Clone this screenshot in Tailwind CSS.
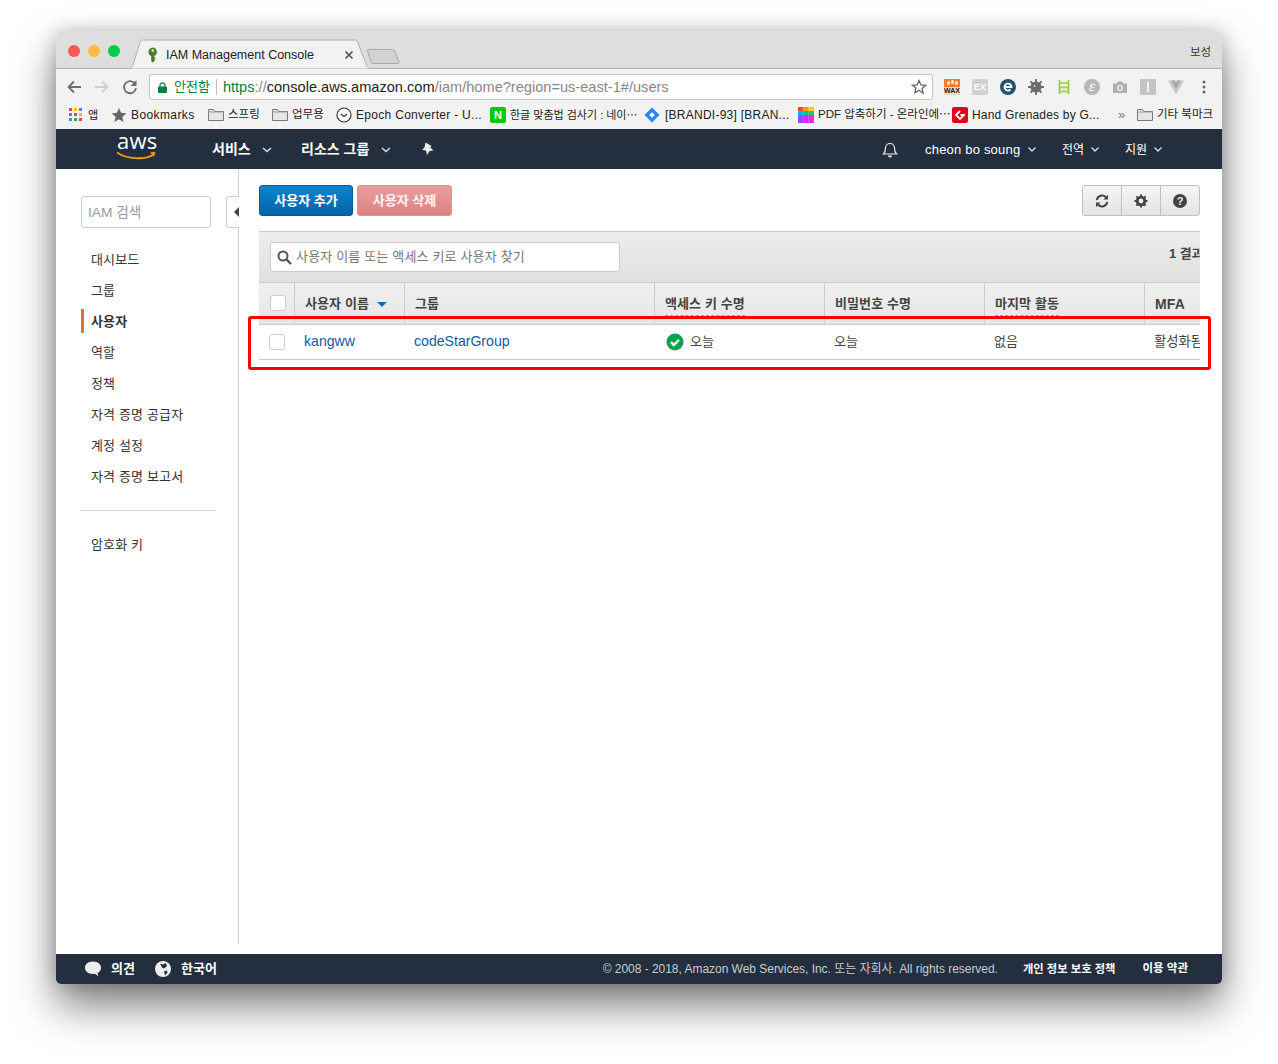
<!DOCTYPE html>
<html lang="ko">
<head>
  <meta charset="UTF-8">
  <title>IAM Management Console</title>
  <script src="https://cdn.jsdelivr.net/npm/@tailwindcss/browser@4"></script>
</head>
<body class="bg-white h-[1064px] overflow-hidden pt-[31px] pl-[56px] font-['Liberation_Sans','Noto_Sans_CJK_KR',sans-serif]">
  <div class="relative w-[1166px] h-[953px] rounded-[5px] flex flex-col shadow-[0_22px_42px_rgba(0,0,0,0.5),0_0_18px_rgba(0,0,0,0.2)] overflow-hidden bg-white">

    <!-- tab strip -->
    <div class="relative h-[38px] shrink-0 bg-[#dedede] border-b border-[#b0b0b0] flex items-center">
      <div class="flex gap-[8px] ml-[12px] mt-[3px]">
        <span class="w-3 h-3 rounded-full bg-[#fc5753]"></span>
        <span class="w-3 h-3 rounded-full bg-[#fdbc40]"></span>
        <span class="w-3 h-3 rounded-full bg-[#00ca4e]"></span>
      </div>
      <svg class="absolute left-[72px] top-[8px]" width="252" height="30" viewBox="0 0 252 30">
        <path d="M0 29.500h1c2 0 3-1 3.800-3L12 3.500C12.600 1.800 13.500 1 15.500 1H226c2 0 3 .8 3.700 2.500l9 23c.7 2 2 3 4 3h1" fill="#f2f2f2" stroke="#b0b0b0"/>
      </svg>
      <svg class="absolute left-[310px] top-[17px]" width="36" height="18" viewBox="0 0 36 18">
        <path d="M2.500 1.500h24c1 0 1.500.4 2 1.300l4.500 11c.4 1-.1 1.700-1 1.700H7c-1 0-1.500-.4-2-1.300L1.500 3c-.3-.9 0-1.500 1-1.500z" fill="#d2d2d2" stroke="#a8a8a8"/>
      </svg>
      <svg class="absolute left-[91px] top-[16px]" width="12" height="16" viewBox="0 0 12 16">
        <path d="M5.500 0.500a4.500 4.500 0 0 1 1.700 8.600V10l1.600 1-1.600 1.200 1 1-1 1-1.800 1.300-1.200-1.200V9.100A4.500 4.500 0 0 1 5.500.5z" fill="#4d7a2a"/>
        <circle cx="5.800" cy="3.500" r="1.300" fill="#e8e8e8"/>
      </svg>
      <span class="absolute left-[110px] top-[16px] text-[12.500px] leading-[16px] text-[#222]">IAM Management Console</span>
      <span class="absolute left-[288px] top-[19px]">
        <svg class="block" width="10" height="10" viewBox="0 0 10 10"><path d="M1.500 1.500l7 7M8.500 1.500l-7 7" stroke="#555" stroke-width="1.700"/></svg>
      </span>
      <span class="absolute left-[1134px] top-[13px] text-[11.500px] leading-[16px] text-[#333]">보성</span>
    </div>

    <!-- address bar -->
    <div class="h-[32px] shrink-0 bg-[#f2f2f2] flex items-center relative pt-[4px]">
      <div class="flex items-center w-[93px] pl-[10px] gap-[12px]">
        <svg width="16" height="16" viewBox="0 0 16 16"><path d="M15 8H2.500M8 2.500L2.500 8 8 13.500" fill="none" stroke="#6e6e6e" stroke-width="1.800"/></svg>
        <svg width="16" height="16" viewBox="0 0 16 16"><path d="M1 8h12.500M8 2.500L13.500 8 8 13.500" fill="none" stroke="#d0d0d0" stroke-width="1.800"/></svg>
        <svg width="16" height="16" viewBox="0 0 16 16"><path d="M13 4.800A6 6 0 1 0 14 9" fill="none" stroke="#6e6e6e" stroke-width="1.800"/><path d="M14.500 1v6h-6z" fill="#6e6e6e"/></svg>
      </div>
      <div class="w-[784px] h-[26px] bg-white border border-[#c4c4c4] rounded-[3px] flex items-center pl-[8px] text-[14.600px] leading-[26px] whitespace-nowrap">
        <svg class="mr-[7px]" width="9" height="11" viewBox="0 0 9 11"><path d="M2 5V3.300a2.500 2.500 0 0 1 5 0V5" fill="none" stroke="#0b8043" stroke-width="1.200"/><rect y="4.500" width="9" height="6.500" rx="1" fill="#0b8043"/></svg>
        <span class="text-[#0b8043] text-[13px]">안전함</span>
        <span class="w-px h-[16px] bg-[#c0c0c0] mx-[6px]"></span>
        <span class="text-[#0b8043]">https</span><span class="text-[#888]">://</span><span class="text-[#222]">console.aws.amazon.com</span><span class="text-[#888]">/iam/home?region=us-east-1#/users</span>
        <svg class="ml-auto mr-[5px]" width="16" height="16" viewBox="0 0 16 16"><path d="M8 1.500l1.900 4.400 4.800.4-3.600 3.200 1 4.700L8 11.300l-4.100 2.500 1-4.700L1.300 6.300l4.800-.4z" fill="none" stroke="#666" stroke-width="1.300"/></svg>
      </div>
      <!-- extension icons -->
      <div class="flex items-center ml-[11px] gap-[12px]">
        <div class="relative w-[16px] h-[16px] bg-[#f47b30] overflow-hidden">
          <span class="absolute left-[3px] top-[2px] w-[3px] h-[4px] rounded-full bg-white/80"></span>
          <span class="absolute left-[7px] top-[1px] w-[3px] h-[4px] rounded-full bg-white/80"></span>
          <span class="absolute left-[11px] top-[2px] w-[3px] h-[4px] rounded-full bg-white/80"></span>
          <span class="absolute left-[-1px] right-[-1px] bottom-[0px] bg-white/70 text-[#222] text-[7px] leading-[8px] font-bold text-center">WAX</span>
        </div>
        <div class="w-[16px] h-[16px] bg-[#d0d0d0] rounded-[2px] text-white text-[9px] leading-[16px] font-bold text-center">EX</div>
        <svg width="16" height="16" viewBox="0 0 16 16"><circle cx="8" cy="8" r="8" fill="#24536e"/><path d="M4.500 8h7A3.500 3.500 0 1 0 10.500 10.500" fill="none" stroke="#fff" stroke-width="1.800"/></svg>
        <svg width="16" height="16" viewBox="0 0 16 16"><circle cx="8" cy="8" r="5.500" fill="#6b6b6b"/><path d="M8 0v16M0 8h16M2.500 2.500l11 11M13.500 2.500l-11 11" stroke="#6b6b6b" stroke-width="1.800"/><circle cx="6.500" cy="7" r="1" fill="#ddd"/></svg>
        <svg width="16" height="16" viewBox="0 0 16 16"><path d="M3.500 1v14M12.500 1v14" stroke="#8cc63f" stroke-width="1.600" fill="none"/><path d="M3.500 4h9M3.500 8.500h9M3.500 12.500h9" stroke="#a5d65a" stroke-width="1.800" fill="none"/></svg>
        <div class="w-[16px] h-[16px] rounded-full bg-[#b8b8b8] text-white text-[15px] leading-[15px] italic text-center font-['Liberation_Serif',serif]">&#949;</div>
        <svg width="16" height="16" viewBox="0 0 16 16"><path d="M1 4.500h3.500L6 2.500h4l1.500 2H15V14H1z" fill="#b0b0b0"/><circle cx="8" cy="9" r="3" fill="#f2f2f2"/><circle cx="8" cy="9" r="1.800" fill="#b0b0b0"/></svg>
        <div class="w-[16px] h-[16px] bg-[#c4c4c4] flex items-center justify-center"><span class="block w-[2.500px] h-[10px] bg-[#f2f2f2]"></span></div>
        <svg width="16" height="16" viewBox="0 0 16 16"><path d="M0 1.500h16L8 15.500z" fill="#c8c8c8"/><path d="M3.500 1.500h3L8 4.500l1.500-3h3L8 10z" fill="#a8a8a8"/></svg>
        <svg class="ml-[6px]" width="4" height="14" viewBox="0 0 4 14"><circle cx="2" cy="2" r="1.500" fill="#666"/><circle cx="2" cy="7" r="1.500" fill="#666"/><circle cx="2" cy="12" r="1.500" fill="#666"/></svg>
      </div>
    </div>

    <!-- bookmarks bar -->
    <div class="h-[28px] shrink-0 bg-[#f2f2f2] flex items-center pl-[13px] text-[12px] tracking-[0.3px] text-[#222] whitespace-nowrap">
      <svg class="mr-[5px]" width="14" height="14" viewBox="0 0 14 14">
        <rect width="3" height="3" fill="#ea4335"/><rect x="5" width="3" height="3" fill="#fbbc05"/><rect x="10" width="3" height="3" fill="#4285f4"/>
        <rect y="5" width="3" height="3" fill="#34a853"/><rect x="5" y="5" width="3" height="3" fill="#ea4335"/><rect x="10" y="5" width="3" height="3" fill="#fbbc05"/>
        <rect y="10" width="3" height="3" fill="#4285f4"/><rect x="5" y="10" width="3" height="3" fill="#34a853"/><rect x="10" y="10" width="3" height="3" fill="#ea4335"/>
      </svg>
      <span class="w-[13px] mr-[10px] text-[11px] tracking-normal">앱</span>
      <svg class="mr-[4px]" width="16" height="16" viewBox="0 0 16 16"><path d="M8 1l2.100 4.800 5.200.5-3.900 3.500 1.100 5.100L8 12.200l-4.500 2.700 1.100-5.100L.7 6.300l5.200-.5z" fill="#666"/></svg>
      <span class="w-[77px] tracking-[0.4px]">Bookmarks</span>
      <svg class="mr-[4px] mb-[2px]" width="16" height="13" viewBox="0 0 16 13"><path d="M.5 12.500V1.500h5l1.500 2h8.500v9z" fill="#e6e6e6" stroke="#777"/><path d="M.5 4h15" stroke="#999"/></svg>
      <span class="w-[44px] text-[11.500px] tracking-normal">스프링</span>
      <svg class="mr-[4px] mb-[2px]" width="16" height="13" viewBox="0 0 16 13"><path d="M.5 12.500V1.500h5l1.500 2h8.500v9z" fill="#e6e6e6" stroke="#777"/><path d="M.5 4h15" stroke="#999"/></svg>
      <span class="w-[44px] text-[11.500px] tracking-normal">업무용</span>
      <svg class="mr-[4px]" width="16" height="16" viewBox="0 0 16 16"><circle cx="8" cy="8" r="7" fill="#fff" stroke="#333" stroke-width="1.200"/><path d="M5 7l3 2.500L11 7" fill="none" stroke="#333" stroke-width="1.200"/></svg>
      <span class="w-[134px]">Epoch Converter - U...</span>
      <div class="mr-[4px] w-[16px] h-[16px] rounded-[2px] bg-[#0ac80a] text-white text-[11px] leading-[16px] tracking-normal font-bold text-center">N</div>
      <span class="w-[134px] text-[11px] tracking-normal">한글 맞춤법 검사기 : 네이⋯</span>
      <svg class="mr-[5px]" width="16" height="16" viewBox="0 0 16 16"><path d="M8 .5L15.500 8 8 15.500.5 8z" fill="#2684ff"/><rect x="6" y="6" width="4" height="4" transform="rotate(45 8 8)" fill="#fff"/></svg>
      <span class="w-[133px] tracking-[0.25px]">[BRANDI-93] [BRAN...</span>
      <svg class="mr-[4px]" width="16" height="16" viewBox="0 0 16 16">
        <rect width="5.400" height="4" fill="#f44b1c"/><rect x="5.300" width="5.400" height="4" fill="#ff9a00"/><rect x="10.600" width="5.400" height="4" fill="#ffcf00"/>
        <rect y="4" width="5.400" height="4" fill="#00b7ff"/><rect x="5.300" y="4" width="5.400" height="4" fill="#00c48c"/><rect x="10.600" y="4" width="5.400" height="4" fill="#2cc84d"/>
        <rect y="8" width="5.400" height="8" fill="#8e4cff"/><rect x="5.300" y="8" width="5.400" height="8" fill="#d028ff"/><rect x="10.600" y="8" width="5.400" height="8" fill="#ff28e0"/>
      </svg>
      <span class="w-[134px] text-[11.500px] tracking-normal">PDF 압축하기 - 온라인에⋯</span>
      <div class="mr-[4px] w-[16px] h-[16px] rounded-[2px] bg-[#e2001a] flex items-center justify-center">
        <svg width="10" height="10" viewBox="0 0 10 10"><path d="M5 1L1 5l4 4 4-4H5.500" fill="none" stroke="#fff" stroke-width="1.800"/></svg>
      </div>
      <span class="w-[146px] tracking-[0.2px]">Hand Grenades by G...</span>
      <span class="w-[19px] text-[#777] text-[13px]">»</span>
      <svg class="mr-[4px] mb-[2px]" width="16" height="13" viewBox="0 0 16 13"><path d="M.5 12.500V1.500h5l1.500 2h8.500v9z" fill="#e6e6e6" stroke="#777"/><path d="M.5 4h15" stroke="#999"/></svg>
      <span class="text-[11.500px] tracking-normal">기타 북마크</span>
    </div>

    <!-- aws nav -->
    <div class="h-[40px] shrink-0 bg-[#232f3e] flex items-center text-white relative">
      <div class="relative w-[156px] h-[40px]">
        <span class="absolute left-[61px] top-[-2px] text-[22px] leading-[26px] tracking-[0.2px] font-['Open_Sans',sans-serif]">aws</span>
        <svg class="absolute left-[60px] top-[21px]" width="42" height="12" viewBox="0 0 42 12"><path d="M1 2.500C11 9.500 29 10 38 4.500" fill="none" stroke="#f90" stroke-width="1.800"/><path d="M34 2.500l5.500-.8-1.500 5z" fill="#f90"/></svg>
      </div>
      <span class="text-[14px] font-bold w-[50px]">서비스</span>
      <svg class="mr-[29px] mt-[2px]" width="10" height="6" viewBox="0 0 10 6"><path d="M1 1l4 3.500L9 1" fill="none" stroke="#ddd" stroke-width="1.500"/></svg>
      <span class="text-[14px] font-bold w-[80px]">리소스 그룹</span>
      <svg class="mr-[30px] mt-[2px]" width="10" height="6" viewBox="0 0 10 6"><path d="M1 1l4 3.500L9 1" fill="none" stroke="#ddd" stroke-width="1.500"/></svg>
      <svg width="14" height="14" viewBox="0 0 14 14"><path d="M4.500.5l6 3.500-1.200 1.500 3.200 3-4 .5L6 13 5 8.500 1 8l2.500-2.500z" fill="#eee"/></svg>
      <svg class="ml-[447px]" width="16" height="18" viewBox="0 0 16 18"><path d="M1.500 14c1.500-1.500 2-3 2-6a4.500 4.500 0 0 1 9 0c0 3 .5 4.500 2 6z" fill="none" stroke="#eee" stroke-width="1.200"/><path d="M6 15.500a2 2 0 0 0 4 0z" fill="#eee"/></svg>
      <span class="ml-[27px] mt-[1px] text-[13px] w-[103px] tracking-[0.2px] whitespace-nowrap">cheon bo soung</span>
      <svg class="mr-[26px] mt-[1px]" width="8" height="5" viewBox="0 0 8 5"><path d="M.5.500L4 4 7.500.500" fill="none" stroke="#ddd" stroke-width="1.300"/></svg>
      <span class="text-[12px] w-[29px] mt-[1px]">전역</span>
      <svg class="mr-[26px] mt-[1px]" width="8" height="5" viewBox="0 0 8 5"><path d="M.5.500L4 4 7.500.500" fill="none" stroke="#ddd" stroke-width="1.300"/></svg>
      <span class="text-[12px] w-[29px] mt-[1px]">지원</span>
      <svg class="mt-[1px]" width="8" height="5" viewBox="0 0 8 5"><path d="M.5.500L4 4 7.500.500" fill="none" stroke="#ddd" stroke-width="1.300"/></svg>
    </div>

    <!-- main -->
    <div class="flex-1 flex relative">
      <!-- sidebar -->
      <div class="w-[183px] h-[775px] shrink-0 border-r border-[#cfcfcf] relative">
        <div class="ml-[25px] mt-[27px] w-[130px] h-[32px] border border-[#ccc] rounded-[3px] px-[6px] text-[13.700px] leading-[31px] text-[#999]">IAM 검색</div>
        <div class="absolute right-[-1px] top-[27px] w-[13px] h-[32px] bg-white border border-r-0 border-[#ccc] rounded-l-[4px] flex items-center justify-end">
          <span class="w-0 h-0 border-y-[5px] border-y-transparent border-r-[5px] border-r-[#444]"></span>
        </div>
        <ul class="mt-[16px] text-[13px] tracking-[0.15px] text-[#333]">
          <li class="h-[31px] leading-[31px] pl-[35px]">대시보드</li>
          <li class="h-[31px] leading-[31px] pl-[35px]">그룹</li>
          <li class="h-[31px] leading-[31px] pl-[35px] font-bold relative"><span class="absolute left-[25px] top-[3px] w-[3px] h-[24px] bg-[#dd7722]"></span>사용자</li>
          <li class="h-[31px] leading-[31px] pl-[35px]">역할</li>
          <li class="h-[31px] leading-[31px] pl-[35px]">정책</li>
          <li class="h-[31px] leading-[31px] pl-[35px]">자격 증명 공급자</li>
          <li class="h-[31px] leading-[31px] pl-[35px]">계정 설정</li>
          <li class="h-[31px] leading-[31px] pl-[35px]">자격 증명 보고서</li>
        </ul>
        <div class="ml-[25px] mt-[18px] w-[135px] border-t border-dotted border-[#c8c8c8]"></div>
        <div class="mt-[18px] h-[31px] leading-[31px] pl-[35px] text-[13px] tracking-[0.15px] text-[#333]">암호화 키</div>
      </div>

      <!-- content -->
      <div class="flex-1 pl-[20px] pr-[22px] pt-[16px] min-w-0">
        <div class="flex gap-[4px] h-[31px]">
          <div class="w-[94px] rounded-[3px] bg-linear-to-b from-[#0a84cf] to-[#0664a8] border border-[#0a5a94] text-white text-[13px] font-bold leading-[29px] text-center">사용자 추가</div>
          <div class="w-[95px] rounded-[3px] bg-linear-to-b from-[#e8a0a0] to-[#dc8080] border border-[#dc9090] text-white/90 text-[13px] font-bold leading-[29px] text-center">사용자 삭제</div>
          <div class="ml-auto w-[118px] flex border border-[#c0c0c0] rounded-[3px] bg-linear-to-b from-[#f5f5f5] to-[#e4e4e4]">
            <div class="flex-1 flex items-center justify-center border-r border-[#c0c0c0]">
              <svg width="14" height="14" viewBox="0 0 14 14"><path d="M1.800 6A5.300 5.300 0 0 1 11 3.400M12.200 8A5.300 5.300 0 0 1 3 10.600" fill="none" stroke="#444" stroke-width="2"/><path d="M13 .8v4.700H8.300zM1 13.200V8.500h4.700z" fill="#444"/></svg>
            </div>
            <div class="flex-1 flex items-center justify-center border-r border-[#c0c0c0]">
              <svg width="14" height="14" viewBox="0 0 14 14"><circle cx="7" cy="7" r="3.800" fill="none" stroke="#444" stroke-width="2.800"/><path d="M7 .5v13M.5 7h13M2.400 2.400l9.200 9.200M11.600 2.400l-9.200 9.200" stroke="#444" stroke-width="2" stroke-dasharray="2.500 8 2.500"/></svg>
            </div>
            <div class="flex-1 flex items-center justify-center">
              <div class="w-[14px] h-[14px] rounded-full bg-[#444] text-[#eee] text-[11px] leading-[14px] font-bold text-center">?</div>
            </div>
          </div>
        </div>

        <div class="mt-[15px] w-[941px] overflow-hidden">
          <div class="h-[51px] relative bg-linear-to-b from-[#ededed] to-[#e0e0e0] border-t border-[#ccc] pl-[11px] pt-[10px]">
            <div class="w-[350px] h-[30px] bg-white border border-[#ccc] rounded-[3px] flex items-center pl-[6px] text-[13px] tracking-[0.17px] text-[#777] whitespace-nowrap">
              <svg class="mr-[4px]" width="15" height="15" viewBox="0 0 15 15"><circle cx="6" cy="6" r="4.500" fill="none" stroke="#555" stroke-width="2"/><path d="M9.500 9.500l4.500 4.500" stroke="#555" stroke-width="2.400"/></svg>
              사용자 이름 또는 액세스 키로 사용자 찾기
            </div>
            <span class="absolute left-[910px] top-[12px] text-[13px] font-bold text-[#444] whitespace-nowrap">1 결과</span>
          </div>
          <div class="flex w-[1000px] h-[43px] bg-linear-to-b from-[#f0f0f0] to-[#e6e6e6] border-y border-[#ccc] text-[13px] tracking-[0.1px] font-bold text-[#444] whitespace-nowrap">
            <div class="w-[36px] border-r border-[#ccc] pl-[11px] pt-[12px]"><span class="block w-[16px] h-[16px] bg-white border border-[#ccc] rounded-[3px]"></span></div>
            <div class="w-[110px] border-r border-[#ccc] pl-[10px] pt-[11px] flex items-start gap-[8px]">사용자 이름<span class="mt-[8px] w-0 h-0 border-x-[5px] border-x-transparent border-t-[5px] border-t-[#0a6fb8]"></span></div>
            <div class="w-[250px] border-r border-[#ccc] pl-[10px] pt-[11px]">그룹</div>
            <div class="w-[170px] border-r border-[#ccc] pl-[10px] pt-[11px]"><span class="inline-block h-[22px] border-b border-dashed border-[#999]">액세스 키 수명</span></div>
            <div class="w-[160px] border-r border-[#ccc] pl-[10px] pt-[11px]">비밀번호 수명</div>
            <div class="w-[160px] border-r border-[#ccc] pl-[10px] pt-[11px]"><span class="inline-block h-[22px] border-b border-dashed border-[#999]">마지막 활동</span></div>
            <div class="pl-[10px] pt-[11px] text-[14px]">MFA</div>
          </div>
          <div class="flex w-[1000px] h-[35px] items-center border-b border-[#ccc] text-[13px] text-[#444] whitespace-nowrap">
            <div class="w-[36px] pl-[10px]"><span class="block w-[16px] h-[16px] bg-white border border-[#ccc] rounded-[3px]"></span></div>
            <div class="w-[110px] pl-[9px] text-[14.100px] text-[#0b5ba8]">kangww</div>
            <div class="w-[250px] pl-[9px] text-[14.100px] text-[#0b5ba8]">codeStarGroup</div>
            <div class="w-[170px] pl-[11px] flex items-center gap-[6px]">
              <svg width="18" height="18" viewBox="0 0 18 18"><circle cx="9" cy="9" r="8.500" fill="#0aa14b"/><path d="M5 9.200l2.800 2.800L13 6.800" fill="none" stroke="#fff" stroke-width="2.400"/></svg>
              오늘
            </div>
            <div class="w-[160px] pl-[9px]">오늘</div>
            <div class="w-[160px] pl-[9px]">없음</div>
            <div class="pl-[9px] text-[13.300px]">활성화됨</div>
          </div>
        </div>
      </div>

      <!-- red highlight drawn over the screenshot -->
      <div class="absolute left-[192px] top-[147px] w-[963px] h-[54px] border-[3px] border-[#ff0000] rounded-[3px]"></div>
    </div>

    <!-- footer -->
    <div class="h-[30px] shrink-0 bg-[#232f3e] flex items-center text-white whitespace-nowrap">
      <svg class="ml-[28px]" width="18" height="16" viewBox="0 0 18 16"><path d="M9 .5c4.700 0 8 2.800 8 6.300 0 2.400-1.500 4.300-3.500 5.300l.8 3-3.700-2.300c-.6.100-1 .2-1.600.2-4.700 0-8-2.700-8-6.200S4.300.5 9 .5z" fill="#eee"/></svg>
      <span class="ml-[9px] w-[35px] text-[13px] font-bold">의견</span>
      <svg class="ml-[9px]" width="16" height="16" viewBox="0 0 16 16"><circle cx="8" cy="8" r="8" fill="#eee"/><path d="M5 2.500l3 1 3-1.500 1 3-3 2.500-2-1zM9 10.500l3-1 .5 2-2.500 3z" fill="#232f3e"/></svg>
      <span class="ml-[10px] text-[13px] font-bold">한국어</span>
      <span class="ml-auto text-[12px] tracking-[-0.03px] text-[#c8ccd0]">© 2008 - 2018, Amazon Web Services, Inc. 또는 자회사. All rights reserved.</span>
      <span class="ml-[25px] text-[11.300px] font-bold">개인 정보 보호 정책</span>
      <span class="ml-[27px] mr-[34px] text-[11.500px] font-bold">이용 약관</span>
    </div>
  </div>
</body>
</html>
